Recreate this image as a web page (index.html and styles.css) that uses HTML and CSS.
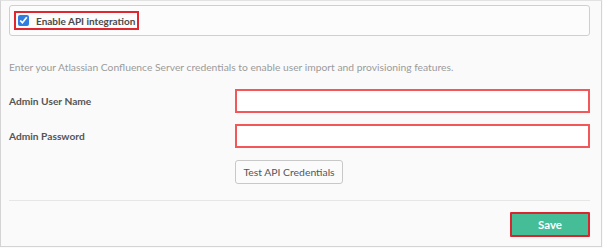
FILE: index.html
```html
<!DOCTYPE html>
<html lang="en">
<head>
    <meta charset="UTF-8">
    <title>API Integration</title>
    <link rel="stylesheet" href="styles.css">
</head>
<body>
    <div class="panel">
        <div class="toggle-box">
            <label class="toggle hl">
                <input type="checkbox" checked>
                <span>Enable API integration</span>
            </label>
        </div>

        <p class="hint">Enter your Atlassian Confluence Server credentials to enable user import and provisioning features.</p>

        <div class="form">
            <div class="row">
                <label class="field-label">Admin User Name</label>
                <input class="field" type="text">
            </div>
            <div class="row">
                <label class="field-label">Admin Password</label>
                <input class="field" type="password">
            </div>
            <div class="row">
                <span></span>
                <button class="btn-test">Test API Credentials</button>
            </div>
        </div>

        <div class="footer">
            <button class="btn-save">Save</button>
        </div>
    </div>
</body>
</html>
```

FILE: styles.css
```css
* {
    margin: 0;
    padding: 0;
    box-sizing: border-box;
}

body {
    font-family: 'Lato', 'Open Sans', sans-serif;
    background: #fafafa;
    width: 603px;
    height: 248px;
}

.panel {
    width: 602px;
    height: 247px;
    border: 1px solid #d4d4d4;
    border-top-color: #e2e2e2;
    background: #fafafa;
    padding: 4px 11px 0 8px;
}

.toggle-box {
    height: 31px;
    border: 1px solid #cfcfcf;
    border-radius: 3px;
    background: #fcfcfc;
    display: flex;
    align-items: center;
    padding-left: 4px;
}

.toggle {
    display: flex;
    align-items: center;
    gap: 7px;
    height: 19px;
    padding: 0 2px 0 2px;
    font-size: 10px;
    font-weight: 700;
    color: #4a4a4a;
}

.hl {
    border: 2px solid #e0262e;
}

.toggle input {
    width: 11px;
    height: 11px;
    accent-color: #2f7de1;
    margin: 0;
}

.hint {
    margin-top: 24px;
    font-size: 10.3px;
    color: #9b9b9b;
    line-height: 14px;
}

.form {
    margin-top: 15px;
    display: flex;
    flex-direction: column;
    gap: 11px;
}

.row {
    display: grid;
    grid-template-columns: 226px 1fr;
    align-items: center;
}

.field-label {
    font-size: 10.2px;
    font-weight: 700;
    color: #555;
}

.field {
    height: 24px;
    background: #fff;
    border: 2px solid #f2575a;
    outline: none;
}

.btn-test {
    justify-self: start;
    margin-top: 1px;
    height: 24px;
    width: 108px;
    font-family: inherit;
    font-size: 10.4px;
    color: #555;
    background: #fbfbfb;
    border: 1px solid #c8c8c8;
    border-radius: 3px;
}

.footer {
    margin-top: 16px;
    border-top: 1px solid #e6e6e6;
    padding-top: 11px;
    display: flex;
    justify-content: flex-end;
}

.btn-save {
    width: 80px;
    height: 25px;
    font-family: inherit;
    font-size: 11.5px;
    font-weight: 700;
    color: #fff;
    background: #45bd97;
    border: 2px solid #d9262e;
    border-radius: 1px;
}
```
